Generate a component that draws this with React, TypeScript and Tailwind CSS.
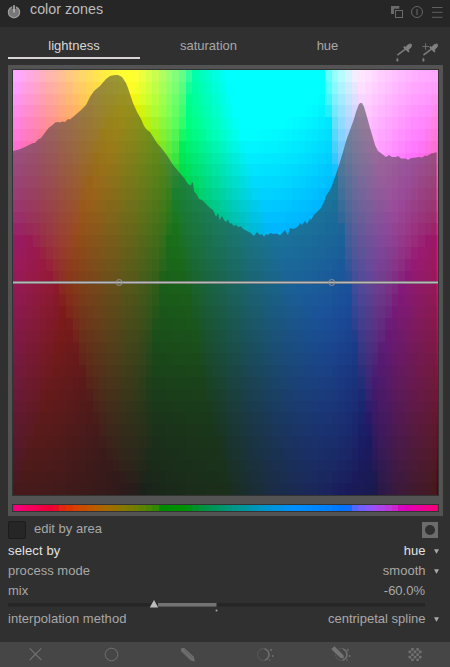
import React from "react";

const COLS = 64;
const ROWS = 36;
const SIZE = 425;
const CHROMA = 0.5 * 128 * Math.SQRT2;

const finv = (t: number) => (t > 0.20689656 ? t * t * t : (116 * t - 16) / 903.2963);
const encode = (v: number) => {
  const c = Math.min(1, Math.max(0, v));
  return Math.round(255 * (c <= 0.0031308 ? 12.92 * c : 1.055 * Math.pow(c, 1 / 2.4) - 0.055));
};

function lch(L: number, h: number) {
  const a = CHROMA * Math.cos(2 * Math.PI * h);
  const b = CHROMA * Math.sin(2 * Math.PI * h);
  const fy = (L + 16) / 116;
  const x = 0.9642 * finv(fy + a / 500);
  const y = finv(fy);
  const z = 0.8249 * finv(fy - b / 200);
  const r = 3.1338561 * x - 1.6168667 * y - 0.4906146 * z;
  const g = -0.9787684 * x + 1.9161415 * y + 0.033454 * z;
  const bl = 0.0719453 * x - 0.2289914 * y + 1.4052427 * z;
  return `rgb(${encode(r)},${encode(g)},${encode(bl)})`;
}

const edge = (i: number, n: number) => Math.round((i * SIZE) / n);
const hueAt = (i: number) => i / (COLS - 1);

const cells: React.ReactNode[] = [];
for (let j = 0; j < ROWS; j++) {
  const L = 100 * (1 - j / (ROWS - 1));
  for (let i = 0; i < COLS; i++) {
    const x = edge(i, COLS);
    const y = edge(j, ROWS);
    cells.push(
      <rect key={`${i}-${j}`} x={x} y={y} width={edge(i + 1, COLS) - x} height={edge(j + 1, ROWS) - y} fill={lch(L, hueAt(i))} />
    );
  }
}

const histogram =
  "13,151 19,149.5 25,147 33,143 35,143 38,139.5 41,138 47,130 49,127.5 52,125.5 55,122.5 58,122 60,122.5 62,121.5 65,122 68,119 70,119.5 73,117 77,113.5 80,111 86,105 90,97 94,91 100,86 106,79 110,76 115,75 118,75 122,77 126,83 128,88 130,94 133,103 137,112 141,119 144,126 147,130 150,132 157,143 163,150 168,157 173,165 179,172 184,178 188,184 191,185.5 192,182 193,183 194,191 197,195 199,199 202,200 205,203 210,208 213,210 216,217 218,213 219.5,220 222,216 224,220 226,222 228,219.5 230,224 232,223 233,226 236,225 238,227 241,226.5 243,229 247,231 251,233 253,235.5 254.5,235.5 257,232 260,235 262,234 264,237 266,234 268,235 270,233 274,234 277,233.5 280,235.5 285,230 288,235 290,228 293,229 296,228 299,225.5 300,223 302,225 305,221 307,224 310,218.5 311,220 314,215 321,208 324,202 326,196 331,188 335,177 339,165 343,152 346,141 350,130 354,119 356,112 359,104 360.5,103 362,103 364,107 367,117 370,128 373,138 375,145 378,151 382,154 386,157 389,155 392,157 396,157 398,156 401,158.5 406,158.5 408,160 411,158 416,157.5 419,157 422,157.5 425,155.5 427,156 431,153.5 434,153 436.6,152 436.6,495 13,495";

function Select({ label, value, active }: { label: string; value: string; active?: boolean }) {
  return (
    <div className={`flex h-5 items-center ${active ? "text-[#e2e2e2]" : "text-[#a8a8a8]"}`}>
      <span className={active ? "tracking-[0.13px]" : "tracking-[0.03px]"}>{label}</span>
      <span className="ml-auto">{value}</span>
      <svg width="5" height="5" viewBox="0 0 5 5" className="ml-[8px] mt-[1px] mr-[11.5px]">
        <path d="M0 .2H5L2.5 4.8Z" fill="#aaa" />
      </svg>
    </div>
  );
}

function Picker({ plus }: { plus?: boolean }) {
  return (
    <svg width="20" height="20" viewBox="0 0 20 20" fill="none">
      <path d="M3 12.7L10 7.3" stroke="#7a7a7a" strokeWidth="1.7" strokeLinecap="round" />
      <path d="M8.8 4.7L14 9.8" stroke="#808080" strokeWidth="1.8" />
      <path d="M9.6 6L13 2.8Q15.6 1.2 16.6 2.4Q17.2 4.4 14.8 6.4L12.4 8.9Z" fill="#808080" stroke="#808080" strokeWidth=".7" />
      <path d="M2.4 15.8Q4.4 19.4 2.4 19.5Q.4 19.3 2.4 15.8Z" fill="#7a7a7a" stroke="#7a7a7a" strokeWidth=".4" />
      {plus && <path d="M1.4 4.5H8M4.6 1.2V7.8" stroke="#6e6e6e" />}
    </svg>
  );
}

export default function App() {
  return (
    <div className="flex h-[667px] w-[450px] flex-col overflow-hidden bg-[#303030] text-[13px] text-[#a8a8a8] [font-family:'Liberation_Sans',Arial,sans-serif]">
      <header className="flex h-[27px] shrink-0 bg-[#262626] pl-[7px]">
        <svg width="14" height="14" viewBox="0 0 14 14" className="mt-[5px]">
          <circle cx="7" cy="7.2" r="5.6" fill="#777" stroke="#a0a0a0" strokeWidth="1.2" />
          <path d="M7 0V4" stroke="#262626" strokeWidth="3.6" />
          <path d="M7 .3V7.5" stroke="#b8b8b8" strokeWidth="1.6" />
        </svg>
        <h1 className="ml-[9px] mt-px h-4 text-[14.3px] leading-4 text-[#bdbdbd]">color zones</h1>
        <svg width="54" height="14" viewBox="0 0 54 14" className="ml-auto mr-[6px] mt-[5px]" fill="none">
          <path d="M1 1H9.3V3.8H4V9H1Z" fill="#6a6a6a" />
          <rect x="5.5" y="5.5" width="7" height="7" stroke="#6a6a6a" />
          <circle cx="27" cy="7" r="5.5" stroke="#666" />
          <path d="M27 4V10" stroke="#606060" strokeWidth="1.2" />
          <path d="M42 2.5H52.5M42 7.3H52.5M42 12.3H52.5" stroke="#606060" />
        </svg>
      </header>

      <nav className="flex h-[38px] shrink-0 pl-2 pt-[5px]">
        <div className="flex h-[27px] w-[132px] justify-center border-b-2 border-[#d8d4d8] pt-[6px] leading-4 text-[#d8d8d8]">lightness</div>
        <div className="w-[137px] pt-[6px] text-center leading-4">saturation</div>
        <div className="w-[101px] pt-[6px] text-center leading-4">hue</div>
        <div className="ml-auto mr-[9px] flex gap-[6px] pt-[10px]">
          <Picker />
          <Picker plus />
        </div>
      </nav>

      <main className="ml-2 h-[451px] w-[435px] shrink-0 bg-[#535353]">
        <svg width="435" height="451" viewBox="8 65 435 451">
          <rect x="12" y="69" width="427" height="427" fill="#333" />
          <g transform="translate(13 70)" shapeRendering="crispEdges">{cells}</g>
          <polygon points={histogram} fill="#333" fillOpacity=".5" />
          <path d="M13 282.5H438" stroke="#858585" strokeWidth="3" strokeOpacity=".85" />
          <path d="M13 282.5H438" stroke="#bababa" strokeWidth="1.2" />
          <circle cx="119.25" cy="282.5" r="3" fill="none" stroke="#919191" />
          <circle cx="331.75" cy="282.5" r="3" fill="none" stroke="#919191" />
          <rect x="12" y="504" width="427" height="8" fill="#333" />
          <g shapeRendering="crispEdges">
            {Array.from({ length: COLS }, (_, i) => (
              <rect key={i} x={13 + edge(i, COLS)} y="505" width={edge(i + 1, COLS) - edge(i, COLS)} height="6" fill={lch(50, hueAt(i))} />
            ))}
          </g>
        </svg>
      </main>

      <section className="flex h-[126px] shrink-0 flex-col pl-2">
        <div className="flex h-[25px] pt-[5px]">
          <div className="h-[18px] w-[18px] rounded-[2px] border border-[#1c1c1c] bg-[#262626]" />
          <span className="ml-2 leading-4">edit by area</span>
          <svg width="16" height="16" className="ml-auto mr-[12px] mt-px">
            <rect width="16" height="16" fill="#6c6c6c" />
            <circle cx="8" cy="8" r="5" fill="#303030" />
          </svg>
        </div>
        <Select label="select by" value="hue" active />
        <Select label="process mode" value="smooth" />
        <div className="flex h-5 items-center justify-between pr-[25px]">
          <span>mix</span>
          <span>-60.0%</span>
        </div>
        <svg width="442" height="12" viewBox="8 600 442 12" className="-mt-px shrink-0">
          <rect x="8" y="603" width="417" height="3.6" fill="#262626" />
          <rect x="158" y="603" width="58.5" height="3.6" fill="#747474" />
          <path d="M148.5 608.5L154 599L159.5 608.5Z" fill="#303030" />
          <path d="M149.8 607.6L154 600L158.2 607.6Z" fill="#bcbcbc" />
          <circle cx="216.5" cy="610.5" r="1" fill="#aaa" />
        </svg>
        <div className="-mt-[3px]">
          <Select label="interpolation method" value="centripetal spline" />
        </div>
      </section>

      <footer className="h-[25px] shrink-0 bg-[#464646]">
        <svg width="450" height="25" viewBox="0 642 450 25" fill="none" stroke="#707070">
          <path d="M29.7 648.3L41.3 660M41.3 648.3L29.7 660" strokeWidth="1.1" />
          <circle cx="111.5" cy="654.5" r="6.3" />
          <path d="M181 648.3L184.3 648L193.8 656.8L194.8 661.5L190.2 660.3L181.3 651.6Z" fill="#707070" stroke="none" />
          <path d="M182.5 652L191 660M184.2 650L193 658.4" stroke="#505050" strokeWidth=".6" />
          <circle cx="263.5" cy="654.5" r="6" stroke="#595959" />
          <path d="M264.5 648.8A6 6 0 0 1 265 660.2" strokeWidth="1.4" />
          <g fill="#707070" stroke="none">
            <circle cx="271" cy="650" r="1" />
            <circle cx="272.7" cy="656" r="1" />
            <circle cx="269.8" cy="660" r=".8" />
            <circle cx="347.8" cy="650" r="1" />
            <circle cx="349.5" cy="656" r="1" />
            <circle cx="347" cy="660" r=".8" />
          </g>
          <circle cx="341.5" cy="654.5" r="6" stroke="#595959" />
          <path d="M343 649A6 6 0 0 1 342.5 660.3" strokeWidth="1.4" />
          <path d="M331.3 648.5L334.5 646L344 655.4L344 659L340.5 658.3L331.8 650Z" fill="#747474" stroke="#464646" strokeWidth=".6" />
          <g fill="#707070" stroke="none">
            {[0, 1, 2, 3, 4].flatMap((r) =>
              [0, 1, 2, 3, 4]
                .filter((c) => (r + c) % 2 === 1)
                .map((c) => <rect key={`${r}${c}`} x={408.5 + c * 2.6} y={648 + r * 2.6} width="2.7" height="2.7" rx=".7" />)
            )}
          </g>
        </svg>
      </footer>
    </div>
  );
}
